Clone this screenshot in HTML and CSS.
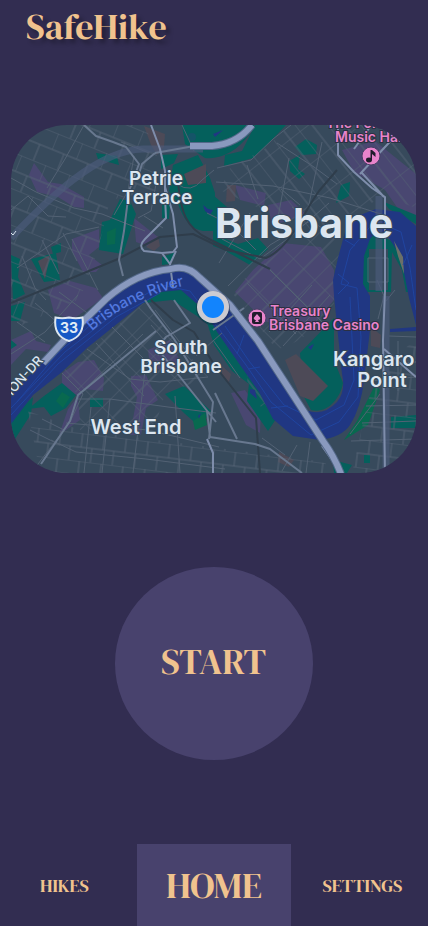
FILE: index.html
```html
<!DOCTYPE html>
<html lang="en">
<head>
<meta charset="utf-8">
<meta name="viewport" content="width=device-width, initial-scale=1">
<title>SafeHike</title>
<link rel="stylesheet" href="styles.css">
</head>
<body>
<div class="app">
  <header class="header"><h1 class="brand">SafeHike</h1></header>
  <main class="main">
    <svg class="map" viewBox="11 125 405 348" preserveAspectRatio="xMidYMid slice" role="img" aria-label="Map of Brisbane">
      <defs>
        <pattern id="grid-a" width="26" height="34" patternUnits="userSpaceOnUse" patternTransform="rotate(22)"><path class="street" d="M0 0H26M0 17H26M0 0V17M13 17V34"/></pattern>
        <pattern id="grid-b" width="24" height="30" patternUnits="userSpaceOnUse" patternTransform="rotate(-45)"><path class="street" d="M0 0H24M0 15H24M0 0V30"/></pattern>
        <pattern id="grid-c" width="22" height="28" patternUnits="userSpaceOnUse" patternTransform="rotate(7)"><path class="street" d="M0 0H22M0 14H22M3 0V14M14 14V28"/></pattern>
        <pattern id="grid-d" width="32" height="26" patternUnits="userSpaceOnUse" patternTransform="rotate(52)"><path class="street" d="M0 0H32M0 13H32M0 0V26"/></pattern>
        <path id="river-label" d="M92 331Q131 296 192 284"/>
      </defs>
      <rect class="land" x="11" y="125" width="405" height="348"/>

      <g class="purple">
        <path d="M34 163L48 182 61 184 84 197V208L74 207 58 197 37 192 29 175ZM72 239L99 229V247L89 255 102 265 96 272H83L72 251ZM48 290L70 281 96 288 103 298 72 320 54 313ZM134 218L158 237 153 248 136 242ZM62 373L78 362 94 360 104 378 103 391 84 389 78 400 80 420 59 435 68 409 78 396 62 387ZM131 376L146 375 152 388 158 400 146 408 141 435H130L137 397 131 386ZM148 350L170 340 182 365 166 372 150 366ZM235 185L266 193 264 206 240 200ZM268 205L291 200 306 214 272 226ZM253 270L283 243 321 247 334 270 334 300 317 320 290 330 265 321 235 292ZM342 150L375 141 416 174V223L401 213 385 190 354 172ZM231 393L245 390 261 412 260 433 246 425Z"/>
        <path d="M11 340L31 331 36 341 51 345 48 352 26 349 11 365Z"/>
      </g>
      <g class="park">
        <path d="M96 153L117 156 119 165 98 159ZM110 220L120 199 130 201 136 214 123 254 99 250 102 222ZM31 259L56 253 60 280 44 282ZM51 247L61 243 61 252 53 254ZM11 255L20 259 18 277 25 294 13 300ZM11 306L25 302 20 321 11 321ZM11 340L17 345 11 349Z"/>
        <path d="M182 125H254C246 145 225 160 205 158L185 144ZM173 165L198 155 210 178 215 193V231L203 231C190 229 183 218 178 204L169 191ZM161 155L178 154 174 163 161 169ZM162 204L170 203 169 219 162 218ZM162 257L176 252 170 264 162 265ZM213 195L227 207 221 237 238 244 258 238 268 249 250 265 224 250 213 246Z"/>
        <path d="M255 125H286L268 144 253 158 224 166 225 155 242 151ZM295 147L306 139 317 145 316 154 302 155ZM289 161L300 155 298 169 305 174 299 179 290 171ZM341 185L350 182 349 196 336 203Z"/>
        <path d="M300 353L334 318V360L343 383C340 400 326 414 311 410L304 397ZM165 394L184 386 211 411 200 427 184 413ZM90 398H103V407H90ZM28 409L44 396 62 383 76 395 66 408 51 416 44 407ZM11 418L33 397 31 414 15 439 11 440ZM203 309L216 330 241 365 261 391 276 419 268 431 247 401 249 384 232 371 214 345ZM361 245L373 233 390 240 405 255 410 292H363ZM384 202L416 215V224L389 209ZM391 417L416 415V428H391ZM333 460L352 465 347 473H334ZM364 455H370V463H364Z"/>
        <path class="grass" d="M107 232L116 228 115 244 107 245ZM56 401L62 392 70 397 63 408ZM193 421L205 413 207 425 195 430ZM357 421L375 385 380 390 368 425 344 440Z"/>
      </g>
      <path class="land" d="M369 249H388V290H369ZM392 252L402 270 406 292H391Z"/>
      <g class="brown"><path d="M144 126L165 134 164 147 157 155 151 145ZM184 174L206 164V183L188 185ZM38 261L50 255 45 279ZM285 360L296 354 328 386 313 401 300 396ZM227 185L236 185 235 201 226 202ZM371 327L381 335 380 348 371 346ZM222 366L231 374 229 382 222 377ZM279 452L294 460 289 467 278 462ZM146 247L158 236 160 246 154 251Z"/></g>
      <circle class="pond" cx="192" cy="137" r="4"/>

      <path fill="url(#grid-a)" d="M11 125H145L160 164 158 190 110 200 98 250 80 299 11 330Z"/>
      <path fill="url(#grid-b)" d="M62 371L144 303 208 377 165 394 155 426 80 430 78 396ZM230 290L320 220 342 242 333 310 300 340 277 350Z"/>
      <path fill="url(#grid-c)" d="M28 411L80 430 218 448 325 462 330 473H40ZM368 400L389 360 416 340V473H352Z"/>
      <path fill="url(#grid-d)" d="M266 148L290 125H416V208L384 196 345 218 310 232 220 190 230 168ZM249 350L300 410 276 431 247 385Z"/>

      <path class="river" d="M11 393L40 365 105 298 131 278 165 269 189 271 210 287 239 318 290 386 306 410Q323 417 337 402 346 391 342 374L334 296 333 280 338 258 345 232 360 215 376 209 400 212 416 226V325L409 298 401 257 389 238Q378 228 370 239L364 256 363 284 370 296 370 330 364 380Q361 408 350 425 342 437 320 440L293 436 273 419 259 392 240 365 213 326 199 304 175 296 143 303 87 348 62 372 33 395 11 424Z"/>
      <path class="river" d="M203 205L208 209 213 210 210 215 205 211ZM308 347L314 344 311 350ZM198 416L201 413 199 419ZM250 389L255 390 257 399 250 393ZM390 329L416 327V331L390 332ZM213 134L223 130 215 137Z"/>
      <path class="sand" d="M394 241L403 257 404 274 398 256Z"/>
      <path class="park" d="M144 303L161 292 181 290 205 311 217 332 197 316 172 300Z"/>
      <g class="channel">
        <path d="M11 408L65 352 120 309 162 285 190 291 213 321 246 365 271 402 311 435 339 422 358 397 361 337 357 288 341 284 350 250 375 221 401 232 410 268 416 310"/>
        <path d="M11 415L58 364 116 317 160 293M17 402L57 354 108 310M225 326L249 361 284 405 316 420 344 405 354 380 350 297M244 335L237 354M248 369L260 367M271 408L288 406M345 240L355 246M338 274L349 283 338 294M355 358L363 370M412 245L403 265"/>
      </g>

      <g class="street">
        <path d="M11 178L36 192 74 208 102 214 145 231M11 210L28 196 48 216 66 217M17 268L66 234 99 227M22 256L35 288 46 300M42 240L59 274M63 233L77 261M72 239L98 290M84 125L65 159 47 188M121 142L149 153M134 156L128 191 114 215M141 177L156 184 151 211 138 218M144 216L163 228M182 125L194 151M177 184Q191 194 202 180L214 170M207 213L231 225 256 250M216 182L273 186 330 198 384 215M217 168L251 160 273 139 291 125M222 239L260 259 290 237 329 203M277 143L314 167 337 184M247 165L258 199M289 158L277 223M322 142L308 209M292 207L326 231M250 213L219 263M300 205L281 189M11 354L45 332 78 295M17 322L45 342M35 303L66 330M59 292L90 315"/>
        <path d="M62 373L83 394 70 422 35 468M78 395L143 334M87 349L130 379 160 382 208 377M96 343L144 396M112 327L157 372M78 399H110L168 407 216 413M91 407L84 473M110 399L102 473M145 370L133 473M66 423L148 430 219 447M42 419L64 430M30 430L60 445M51 440L76 452 146 459 225 469M175 396L180 473M151 325L164 340 158 356M155 310L188 353M213 340L240 378M222 333L196 356M269 332L312 285M283 346L330 295M266 266L323 323M247 283L296 334M228 286L270 245 310 221M377 280L384 296 378 319M368 258H388V282H368ZM395 290L386 301M368 381L416 377M374 366L416 362M366 406L416 405M362 423L416 421M351 441L416 439M398 341V391M389 336L416 337M297 445L282 471M310 442L306 473M350 434L380 394M262 438L285 455"/>
      </g>
      <path class="tunnel" d="M11 238C46 201 97 150 143 149H203M379 196V291M386 296V473"/>
      <path class="rail" d="M11 303L118 259 160 237 193 234 226 250 266 258C290 248 303 213 319 191L337 170M151 300L173 320 194 332 215 366 256 418 260 473M178 183C181 211 185 228 209 239L270 269"/>
      <g class="road-edge">
        <path d="M84 125L96 136 113 142 126 147 139 164 129 191 124 231 119 260 123 276M155 153L142 164 138 177M155 153L200 145M145 300L151 309 174 339 213 402 209 439M174 300L190 323 166 337 157 348 216 422M207 411L210 437 255 444 270 449 302 473M215 393L237 439M156 331L78 395 70 421 41 464M213 330L244 308"/>
      </g>
      <g class="road-light">
        <path d="M151 125L160 149 165 171V197L166 218 145 239Q138 246 144 251L162 253 173 252 177 247 173 214 165 187M162 253L170 264 176 251M170 264L173 287M338 125V155L354 172 372 188 385 197 385 291 383 340 385 473M362 173L384 197M384 349L416 377M398 133L360 174M354 149L370 127M207 439L213 453V473M341 473L322 446"/>
      </g>
      <path class="motorway-edge" d="M43 363L71 333 106 299Q137 272 171 269 187 264 200 278L230 305 258 341 323 441Q334 456 341 474M190 146H212Q237 144 252 125"/>
      <path class="motorway" d="M43 363L71 333 106 299Q137 272 171 269 187 264 200 278L230 305 258 341 323 441Q334 456 341 474M190 146H212Q237 144 252 125"/>

      <g class="place">
        <text class="city" x="304" y="238">Brisbane</text>
        <text class="suburb" x="156" y="185">Petrie</text><text class="suburb" x="157" y="204">Terrace</text>
        <text class="suburb" x="181" y="354">South</text><text class="suburb" x="181" y="373">Brisbane</text>
        <text class="suburb large" x="136" y="434">West End</text>
        <text class="suburb large start" x="333" y="366">Kangaro</text><text class="suburb large" x="382" y="387">Point</text>
      </g>
      <text class="street-name" transform="translate(12 396) rotate(-48)">ION-DR</text>
      <path class="name-tip" d="M11 233L13 235 16 231"/>
      <text class="water-name"><textPath href="#river-label">Brisbane River</textPath></text>
      <g class="poi">
        <text x="326" y="128">The Fortitude</text><text x="335" y="142">Music Hall</text>
        <text x="270" y="316">Treasury</text><text x="269" y="330">Brisbane Casino</text>
        <circle cx="371" cy="156" r="9"/><circle cx="257" cy="318" r="9"/>
      </g>
      <g class="poi-icon"><ellipse cx="369" cy="160" rx="3" ry="2.4"/><path d="M370.500 150H372L375.500 153V157L372 154V160H370.500Z"/><rect x="252" y="312" width="10" height="12" rx="2"/></g>
      <path class="spade" d="M257 314L260 317.500Q261 320 258 320L259 322H255L256 320Q253 320 254 317.500Z"/>
      <path class="shield" d="M55.500 317.500Q62 319 69 317.500 76 319 82.500 317.500 85 336 69 341 53 336 55.500 317.500Z"/>
      <text class="route" x="69" y="333">33</text>
      <circle class="locator-shadow" cx="213" cy="308" r="17"/><circle class="locator-ring" cx="213" cy="307" r="16"/><circle class="locator" cx="213" cy="307" r="11"/>
    </svg>
    <button class="start-button" type="button">START</button>
  </main>
  <nav class="nav" aria-label="Main">
    <a class="nav-link nav-link-first" href="#hikes">HIKES</a>
    <a class="nav-link active" href="#home" aria-current="page">HOME</a>
    <a class="nav-link nav-link-last" href="#settings">SETTINGS</a>
  </nav>
</div>
</body>
</html>
```
FILE: styles.css
```css
* { box-sizing: border-box; }
body {
  margin: 0;
  background: #322d51;
  color: #f0c38e;
  font-family: "DM Serif Display", "Liberation Serif", serif;
  font-weight: 400;
}
.app { min-height: 100vh; display: flex; flex-direction: column; }
.header { padding: 7px 26px 0; }
.brand { margin: 0; font-size: 36px; font-weight: 400; line-height: 40px; text-shadow: 4px 4px 4px rgba(0, 0, 0, 0.3); }
.main { flex: 1; display: flex; flex-direction: column; align-items: center; padding: 78px 12px 84px 11px; }
.map { display: block; width: 100%; height: auto; border-radius: 56px; overflow: hidden; font-family: Inter, "Liberation Sans", sans-serif; }
.start-button {
  width: 198px;
  height: 193px;
  margin-top: 94px;
  padding: 0 0 4px;
  border: 0;
  border-radius: 50%;
  background: #48426d;
  color: inherit;
  font: inherit;
  font-size: 36px;
  cursor: pointer;
}
.nav { display: grid; grid-template-columns: 32fr 36fr 32fr; height: 82px; }
.nav-link { display: flex; align-items: center; justify-content: center; color: inherit; font-size: 18px; text-decoration: none; }
.nav-link-first { padding-right: 8px; }
.nav-link-last { padding-left: 6px; }
.nav-link.active { background: #48426d; font-size: 36px; }

.land { fill: #374a5c; }
.purple { fill: #494771; }
.park { fill: #04605c; }
.grass { fill: #08694f; }
.brown { fill: #4d4a57; }
.pond { fill: #155468; }
.river { fill: #203783; }
.sand { fill: #6c7068; }
.street, .channel, .tunnel, .rail, .road-edge, .road-light, .motorway, .motorway-edge { fill: none; stroke-linejoin: round; }
.street { stroke: #536274; stroke-width: 1; }
.channel { stroke: #2045a0; stroke-width: 1; }
.tunnel { stroke: #4c5b7b; stroke-width: 7; opacity: 0.65; }
.rail { stroke: #2f3d4b; stroke-width: 2; }
.road-edge { stroke: #68788f; stroke-width: 2; }
.road-light { stroke: #7e8dab; stroke-width: 2; }
.motorway-edge { stroke: #536889; stroke-width: 8; }
.motorway { stroke: #8999be; stroke-width: 6; }
.place text { fill: #dce6f0; stroke: #35485b; stroke-width: 2; paint-order: stroke; text-anchor: middle; font-weight: 600; }
.place .city { font-size: 41px; font-weight: 700; }
.place .suburb { font-size: 19px; }
.place .large { font-size: 20px; }
.place .start { text-anchor: start; }
.street-name { fill: #dce6f0; stroke: #35485b; stroke-width: 2; paint-order: stroke; font-size: 13px; font-weight: 500; }
.name-tip { fill: none; stroke: #dce6f0; stroke-width: 1; }
.water-name { fill: #5278df; font-size: 15px; font-weight: 500; }
.poi { fill: #e884cb; font-size: 14px; font-weight: 600; }
.poi text { stroke: #2b3042; stroke-width: 2; paint-order: stroke; }
.poi circle { stroke: #493f65; stroke-width: 1; }
.poi-icon { fill: #211c2c; }
.spade { fill: #e884cb; }
.shield { fill: #1558c5; stroke: #dce6f0; stroke-width: 2; }
.route { fill: #e3edf6; font-size: 14px; font-weight: 700; text-anchor: middle; }
.locator-shadow { fill: #1d2948; opacity: 0.5; }
.locator-ring { fill: #cccbd2; }
.locator { fill: #1284fd; }
```
